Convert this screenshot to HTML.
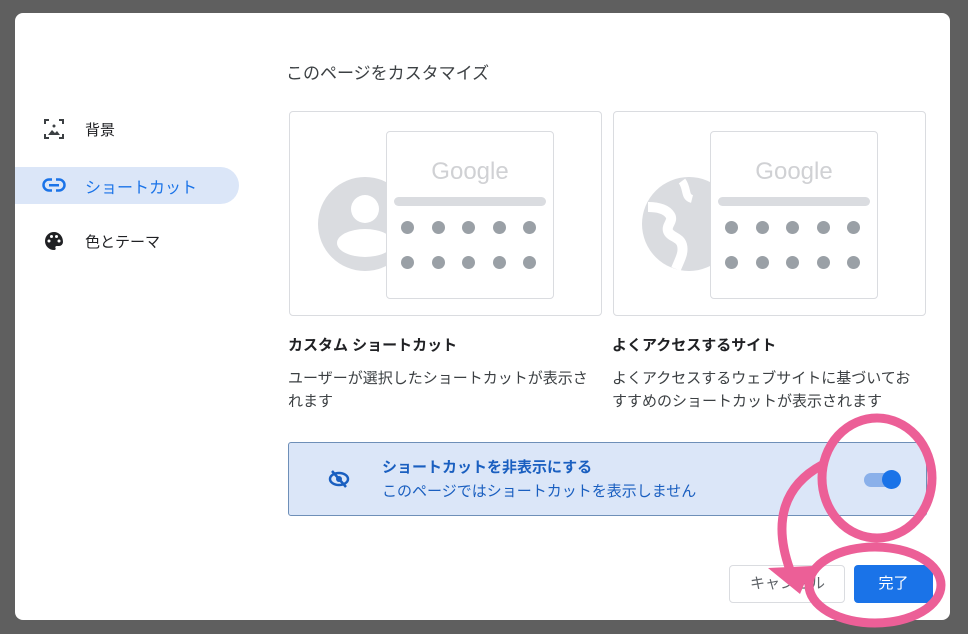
<!DOCTYPE html>
<html><head><meta charset="utf-8"><style>
*{margin:0;padding:0;box-sizing:border-box}
body{width:968px;height:634px;background:#5f5f5f;position:relative;overflow:hidden;font-family:"Liberation Sans","Noto Sans CJK JP",sans-serif;color:#202124}
.dlg{position:absolute;left:15px;top:13px;width:935px;height:607px;background:#fff;border-radius:8px}
.a{position:absolute}
.t{font-size:15px;white-space:nowrap}
.card{position:absolute;top:111px;width:313px;height:205px;border:1px solid #dadce0;border-radius:4px;overflow:hidden}
.inner{position:absolute;left:96px;top:19px;width:168px;height:168px;border:1px solid #dadce0;border-radius:4px;background:#fff}
.g{position:absolute;left:0;width:100%;top:26px;text-align:center;font-size:24px;color:#d0d1d4}
.bar{position:absolute;left:7px;right:7px;top:65px;height:9px;border-radius:5px;background:#dadce0}
.dot{position:absolute;width:13px;height:13px;border-radius:50%;background:#9aa0a6}
</style></head><body>
<div class="dlg"></div>
<div class="a t" style="left:286px;top:59px;font-size:17px;color:#3c4043">このページをカスタマイズ</div>
<svg class="a" style="left:43px;top:118px" width="22" height="22" viewBox="0 0 22 22"><path d="M2 6V2h4M16 2h4v4M20 16v4h-4M6 20H2v-4" fill="none" stroke="#3c4043" stroke-width="2"/><circle cx="11" cy="8" r="1.5" fill="#3c4043"/><path d="M5 17l4-5 3 3 2-2 3 4z" fill="#3c4043"/></svg>
<div class="a t" style="left:85px;top:119px">背景</div>
<div class="a" style="left:15px;top:167px;width:224px;height:37px;background:#dbe6f8;border-radius:0 19px 19px 0"></div>
<svg class="a" style="left:42px;top:178px" width="24" height="14" viewBox="0 0 24 14"><rect x="1.5" y="1.5" width="21" height="11" rx="5.5" fill="none" stroke="#1a73e8" stroke-width="2.5"/><rect x="7" y="6" width="10" height="2.5" fill="#1a73e8"/><rect x="10" y="0" width="4" height="5" fill="#dbe6f8"/><rect x="10" y="9.5" width="4" height="5" fill="#dbe6f8"/></svg>
<div class="a t" style="left:85px;top:174px;color:#1a73e8;font-size:16px">ショートカット</div>
<svg class="a" style="left:44px;top:231px" width="20" height="20" viewBox="0 0 20 20"><path d="M10 1a9 9 0 0 0 0 18c1.5 0 2-1 1.5-2s0-2 1.5-2h2a4 4 0 0 0 4-4C19 5 15 1 10 1z" fill="#202124"/><circle cx="5" cy="10" r="1.5" fill="#fff"/><circle cx="7.5" cy="5.5" r="1.5" fill="#fff"/><circle cx="12.5" cy="5.5" r="1.5" fill="#fff"/><circle cx="15" cy="10" r="1.5" fill="#fff"/></svg>
<div class="a t" style="left:85px;top:231px">色とテーマ</div>
<div class="card" style="left:289px">
<svg class="a" style="left:28px;top:65px" width="100" height="100" viewBox="0 0 100 100"><circle cx="47" cy="47" r="47" fill="#dadce0"/><circle cx="47" cy="32" r="14" fill="#fff"/><ellipse cx="47" cy="66" rx="28" ry="14" fill="#fff"/></svg>
<div class="inner"><div class="g">Google</div><div class="bar"></div>
<div class="dot" style="left:14px;top:89px"></div><div class="dot" style="left:45px;top:89px"></div><div class="dot" style="left:75px;top:89px"></div><div class="dot" style="left:106px;top:89px"></div><div class="dot" style="left:136px;top:89px"></div>
<div class="dot" style="left:14px;top:124px"></div><div class="dot" style="left:45px;top:124px"></div><div class="dot" style="left:75px;top:124px"></div><div class="dot" style="left:106px;top:124px"></div><div class="dot" style="left:136px;top:124px"></div></div>
</div>
<div class="card" style="left:613px">
<svg class="a" style="left:28px;top:65px" width="100" height="100" viewBox="0 0 100 100"><circle cx="47" cy="47" r="47" fill="#dadce0"/><path d="M6 30c10 0 18 2 22 8s-4 10-2 16 12 6 14 14-2 14-6 24" fill="none" stroke="#fff" stroke-width="10"/><path d="M40 4c6 8 2 16 10 18" fill="none" stroke="#fff" stroke-width="8"/></svg>
<div class="inner"><div class="g">Google</div><div class="bar"></div>
<div class="dot" style="left:14px;top:89px"></div><div class="dot" style="left:45px;top:89px"></div><div class="dot" style="left:75px;top:89px"></div><div class="dot" style="left:106px;top:89px"></div><div class="dot" style="left:136px;top:89px"></div>
<div class="dot" style="left:14px;top:124px"></div><div class="dot" style="left:45px;top:124px"></div><div class="dot" style="left:75px;top:124px"></div><div class="dot" style="left:106px;top:124px"></div><div class="dot" style="left:136px;top:124px"></div></div>
</div>
<div class="a t" style="left:288px;top:334px;font-weight:bold">カスタム ショートカット</div>
<div class="a" style="left:288px;top:367px;font-size:15px;line-height:23px;width:306px;color:#3c4043">ユーザーが選択したショートカットが表示されます</div>
<div class="a t" style="left:612px;top:334px;font-weight:bold">よくアクセスするサイト</div>
<div class="a" style="left:612px;top:367px;font-size:15px;line-height:23px;width:306px;color:#3c4043">よくアクセスするウェブサイトに基づいておすすめのショートカットが表示されます</div>
<div class="a" style="left:288px;top:442px;width:639px;height:74px;background:#dbe6f8;border:1px solid #6e8fb8;border-radius:3px"></div>
<svg class="a" style="left:328px;top:469px" width="22" height="20" viewBox="0 0 22 20"><ellipse cx="11" cy="10" rx="9" ry="6" fill="none" stroke="#1a5fc0" stroke-width="2.5"/><circle cx="11" cy="10" r="3" fill="#1a5fc0"/><path d="M4 2l14 16" stroke="#1a5fc0" stroke-width="2.5"/></svg>
<div class="a t" style="left:382px;top:456px;color:#1a5fc0;font-weight:bold">ショートカットを非表示にする</div>
<div class="a t" style="left:382px;top:480px;color:#1a5fc0">このページではショートカットを表示しません</div>
<div class="a" style="left:864px;top:473px;width:34px;height:14px;border-radius:7px;background:#8ab0ea"></div>
<div class="a" style="left:882px;top:470px;width:19px;height:19px;border-radius:50%;background:#1a73e8"></div>
<div class="a t" style="left:729px;top:565px;width:116px;height:38px;border:1px solid #dadce0;border-radius:4px;color:#5f6368;line-height:36px;padding-left:20px">キャンセル</div>
<div class="a t" style="left:854px;top:565px;width:79px;height:38px;background:#1a73e8;border-radius:4px;color:#fff;line-height:38px;text-align:center">完了</div>
<svg class="a" style="left:0;top:0" width="968" height="634" viewBox="0 0 968 634">
<g fill="none" stroke="#ec5f97" stroke-width="9">
<ellipse cx="877" cy="478" rx="55" ry="60"/>
<ellipse cx="875" cy="585" rx="66" ry="38"/>
<path d="M822 465C785 485 772 520 790 570"/>
</g>
<path d="M768 568l44 -2 -12 28z" fill="#ec5f97"/>
</svg>
</body></html>
